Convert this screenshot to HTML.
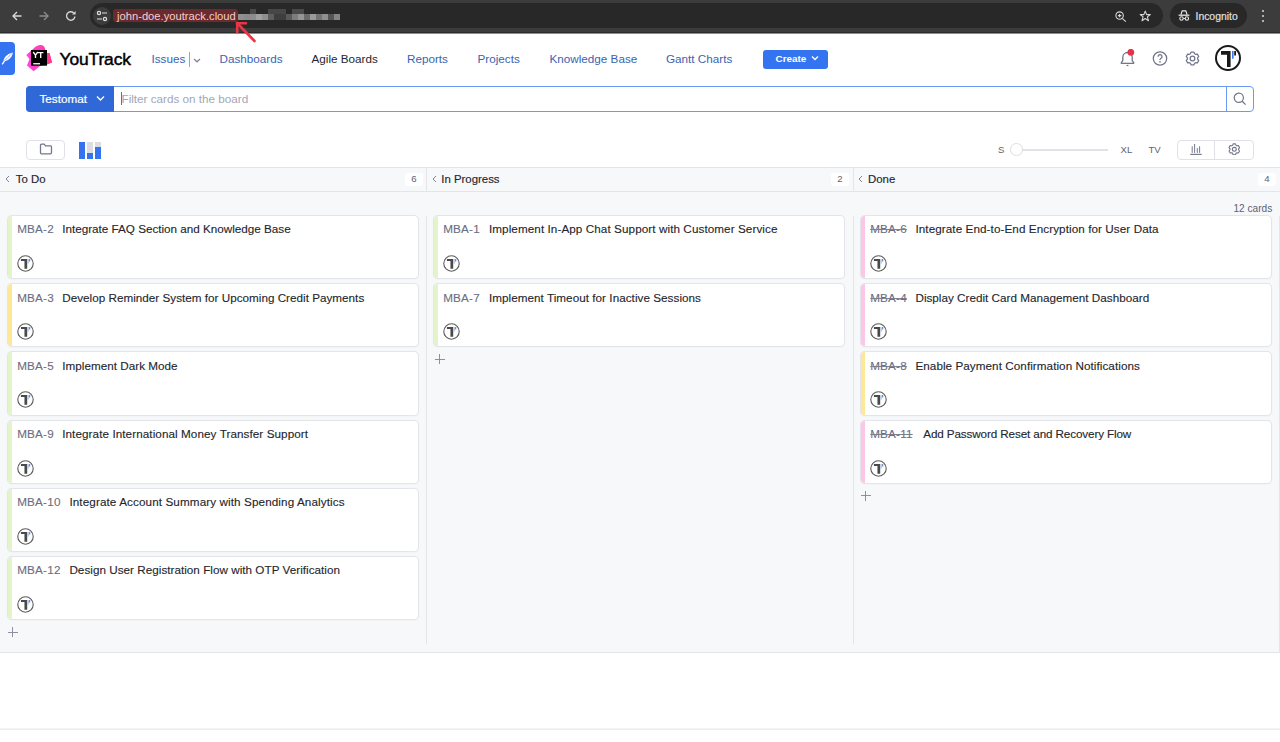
<!DOCTYPE html>
<html><head><meta charset="utf-8">
<style>
*{box-sizing:border-box;margin:0;padding:0}
html,body{width:1280px;height:742px;overflow:hidden;background:#fff;font-family:"Liberation Sans",sans-serif;position:relative}
.a{position:absolute}
.nw{white-space:nowrap}
.nav{font-size:11.7px;line-height:14px;color:#3a63b0;top:52px;white-space:nowrap}
.card{position:absolute;background:#fff;border-radius:4px;height:62.2px;width:410px;box-shadow:0 0 0 1px #e4e5ea,0 0 1.5px 1px rgba(0,0,0,.04),0 1px 2px rgba(0,0,0,.05);overflow:hidden}
.bar{position:absolute;left:0;top:0;bottom:0;width:3.6px}
.ln{position:absolute;left:9.2px;top:6.4px;font-size:11.7px;line-height:14px;white-space:nowrap;color:#24262d;-webkit-text-stroke:0.12px #24262d}
.id{color:#6a6e80;margin-right:8px;letter-spacing:0.2px;-webkit-text-stroke:0.1px #6a6e80}
.st{text-decoration:line-through;text-decoration-color:#7c8092}
.av{position:absolute;left:9px;top:39px;width:17px;height:17px}
.ch{position:absolute;top:168px;height:23px;font-size:11.4px;line-height:14px;color:#25272e;-webkit-text-stroke:0.15px #25272e}
.cnt{position:absolute;top:172.5px;width:18px;height:13.6px;background:#fff;border-radius:3px;font-size:9.6px;line-height:12.2px;text-align:center;color:#5d6275}
.plus{position:absolute;width:10px;height:10px}
.plus:before{content:"";position:absolute;left:0;top:4.5px;width:10px;height:1.2px;background:#8c90a0}
.plus:after{content:"";position:absolute;left:4.5px;top:0;width:1.2px;height:10px;background:#8c90a0}
</style></head><body>

<div class="a" style="left:0;top:0;width:1280px;height:33px;background:#3c3c3c;border-bottom:1px solid #2c2c2c"></div><div class="a" style="left:0;top:33px;width:1280px;height:1px;background:#8e8e8e"></div>
<div class="a" style="left:90px;top:3.2px;width:1073px;height:25px;border-radius:12.5px;background:#282828"></div>
<div class="a" style="left:93px;top:7px;width:18px;height:18px;border-radius:9px;background:#3c3c3c"></div>
<div class="a" style="left:1170px;top:3.2px;width:77px;height:25px;border-radius:12.5px;background:#282828"></div>
<svg class="a" style="left:11.5px;top:10.5px" width="10" height="10" viewBox="0 0 10 10"><path d="M9.5 5H1.2M5 1L1 5L5 9" fill="none" stroke="#d6d6d6" stroke-width="1.4"/></svg>
<svg class="a" style="left:38.5px;top:10.5px" width="10" height="10" viewBox="0 0 10 10"><path d="M0.5 5H8.8M5 1L9 5L5 9" fill="none" stroke="#8a8a8a" stroke-width="1.4"/></svg>
<svg class="a" style="left:64.5px;top:10px" width="12" height="12" viewBox="0 0 12 12"><path d="M9.9 6.5A4.2 4.2 0 1 1 8.7 3" fill="none" stroke="#d6d6d6" stroke-width="1.4"/><path d="M10.6 1V4.6H7z" fill="#d6d6d6"/></svg>
<svg class="a" style="left:96px;top:10px" width="12" height="12" viewBox="0 0 12 12"><circle cx="3" cy="3" r="1.6" fill="none" stroke="#e0e0e0" stroke-width="1.2"/><path d="M6 3h5M1 9h5" stroke="#e0e0e0" stroke-width="1.2"/><circle cx="9" cy="9" r="1.6" fill="none" stroke="#e0e0e0" stroke-width="1.2"/></svg>
<div class="a" style="left:113px;top:9px;width:125px;height:13px;border-radius:3px;background:#6a2a2e"></div>
<div class="a nw" style="left:117px;top:8.5px;font-size:11.2px;line-height:14px;color:#f2cfd0">john-doe.youtrack.cloud</div>
<div class="a" style="left:237.5px;top:14px;width:6px;height:6px;background:#909090"></div>
<div class="a" style="left:243.5px;top:14px;width:6px;height:6px;background:#8a8a8a"></div>
<div class="a" style="left:249.5px;top:14px;width:6px;height:6px;background:#8c8c8c"></div>
<div class="a" style="left:255.5px;top:14px;width:6px;height:6px;background:#a0a0a0"></div>
<div class="a" style="left:261.5px;top:14px;width:6px;height:6px;background:#8f8f8f"></div>
<div class="a" style="left:267.5px;top:14px;width:6px;height:6px;background:#5e5e5e"></div>
<div class="a" style="left:273.5px;top:14px;width:6px;height:6px;background:#3e3e3e"></div>
<div class="a" style="left:279.5px;top:14px;width:6px;height:6px;background:#3e3e3e"></div>
<div class="a" style="left:285.5px;top:14px;width:6px;height:6px;background:#5a5a5a"></div>
<div class="a" style="left:291.5px;top:14px;width:6px;height:6px;background:#7d7d7d"></div>
<div class="a" style="left:297.5px;top:14px;width:6px;height:6px;background:#959595"></div>
<div class="a" style="left:303.5px;top:14px;width:6px;height:6px;background:#6a6a6a"></div>
<div class="a" style="left:309.5px;top:14px;width:6px;height:6px;background:#9a9a9a"></div>
<div class="a" style="left:315.5px;top:14px;width:6px;height:6px;background:#747474"></div>
<div class="a" style="left:321.5px;top:14px;width:6px;height:6px;background:#8f8f8f"></div>
<div class="a" style="left:327.5px;top:14px;width:6px;height:6px;background:#555555"></div>
<div class="a" style="left:333.5px;top:14px;width:6px;height:6px;background:#858585"></div>
<div class="a" style="left:249.5px;top:9px;width:6px;height:5px;background:#4a4a4a"></div>
<div class="a" style="left:267.5px;top:9px;width:6px;height:5px;background:#474747"></div>
<div class="a" style="left:273.5px;top:9px;width:6px;height:5px;background:#474747"></div>
<div class="a" style="left:279.5px;top:9px;width:6px;height:5px;background:#474747"></div>
<div class="a" style="left:291.5px;top:9px;width:6px;height:5px;background:#4a4a4a"></div>
<div class="a" style="left:297.5px;top:9px;width:6px;height:5px;background:#4a4a4a"></div>
<svg class="a" style="left:230px;top:18px" width="30" height="26" viewBox="0 0 30 26"><path d="M7 5L24.5 23" stroke="#ee3344" stroke-width="2.6" stroke-linecap="round"/><path d="M7.2 5.2H16M7.2 5.2V14" stroke="#ee3344" stroke-width="2.6" stroke-linecap="round"/></svg>
<svg class="a" style="left:1115px;top:11px" width="12" height="11" viewBox="0 0 12 11"><circle cx="4.6" cy="4.6" r="3.7" fill="none" stroke="#d8d8d8" stroke-width="1.1"/><path d="M7.3 7.3L10.8 10.6M2.9 4.6h3.4M4.6 2.9v3.4" stroke="#d8d8d8" stroke-width="1.1"/></svg>
<svg class="a" style="left:1138.5px;top:9.5px" width="12.5" height="12" viewBox="0 0 13 13"><path d="M6.5 1.2L8 5H12L8.8 7.5L10 11.6L6.5 9.2L3 11.6L4.2 7.5L1 5H5z" fill="none" stroke="#d8d8d8" stroke-width="1.15" stroke-linejoin="round"/></svg>
<svg class="a" style="left:1178px;top:9px" width="12" height="12" viewBox="0 0 12 12"><path d="M3 5.6L4.1 1.9H7.9L9 5.6" fill="none" stroke="#e6e6e6" stroke-width="1.2" stroke-linejoin="round"/><path d="M0.6 6.2H11.4" stroke="#e6e6e6" stroke-width="1.3"/><circle cx="3.5" cy="9.5" r="1.7" fill="none" stroke="#e6e6e6" stroke-width="1.1"/><circle cx="8.9" cy="9.5" r="1.7" fill="none" stroke="#e6e6e6" stroke-width="1.1"/><path d="M5.2 9.5H7.2" stroke="#e6e6e6" stroke-width="1"/></svg>
<div class="a nw" style="left:1195.5px;top:10px;font-size:10.4px;line-height:13px;color:#e4e4e4;-webkit-text-stroke:0.15px #e4e4e4">Incognito</div>
<div class="a" style="left:1262px;top:10.0px;width:2.4px;height:2.4px;border-radius:2px;background:#d8d8d8"></div>
<div class="a" style="left:1262px;top:15.0px;width:2.4px;height:2.4px;border-radius:2px;background:#d8d8d8"></div>
<div class="a" style="left:1262px;top:19.6px;width:2.4px;height:2.4px;border-radius:2px;background:#d8d8d8"></div>
<div class="a" style="left:0;top:42px;width:15px;height:33px;background:#3574f0;border-radius:0 4px 4px 0"></div>
<svg class="a" style="left:1px;top:51px" width="14" height="14" viewBox="0 0 14 14"><path d="M1.5 12.8L3.2 10.3" stroke="#fff" stroke-width="1.4" stroke-linecap="round"/><path d="M2.6 10.6C2.2 7.5 5.5 3 11.8 1.6C11.5 5.2 8.5 9.6 2.6 10.6z" fill="#fff"/><path d="M3.6 9.5L10.5 3" stroke="#3574f0" stroke-width=".8" stroke-dasharray="1.3 .8"/></svg>
<svg class="a" style="left:26px;top:44px" width="27" height="28" viewBox="0 0 27 28"><defs><linearGradient id="pg" x1="0" y1="0" x2="1" y2="0"><stop offset="0" stop-color="#ff45e0"/><stop offset="1" stop-color="#ff3a9a"/></linearGradient></defs><path d="M0.3 10.9L7 5C10 2 12 1 14.5 1C17 1 18.5 2.5 19 4.5L20 9.5L23.5 9L26 18.5L21 20.5L14 22L7.6 27.3L1 21.5L3.5 15z" fill="url(#pg)"/><path d="M20 9.5L23.5 9L26 18.5L20 20.5z" fill="#ff3d86"/><rect x="5" y="6" width="16" height="15.7" fill="#000"/><path d="M7.2 8L9.5 11.2V14M11.8 8L9.5 11.2M12 8.6H17.4M14.7 8.6V14" fill="none" stroke="#fff" stroke-width="1.35"/><rect x="7.2" y="19.1" width="6.8" height="1.3" fill="#fff"/></svg>
<div class="a nw" style="left:59.5px;top:49px;font-size:17.4px;line-height:20px;color:#000;-webkit-text-stroke:0.45px #000;letter-spacing:-0.1px">YouTrack</div>
<div class="a nav" style="left:151.5px">Issues</div>
<div class="a" style="left:188.7px;top:52px;width:1px;height:15px;background:#a3a7b5"></div>
<svg class="a" style="left:193px;top:58px" width="8" height="5" viewBox="0 0 8 5"><path d="M1 1L4 3.8L7 1" fill="none" stroke="#80869a" stroke-width="1.25"/></svg>
<div class="a nav" style="left:219.5px;color:#3a63b0">Dashboards</div>
<div class="a nav" style="left:311.5px;color:#25272e">Agile Boards</div>
<div class="a nav" style="left:407px;color:#3a63b0">Reports</div>
<div class="a nav" style="left:477.5px;color:#3a63b0">Projects</div>
<div class="a nav" style="left:549.5px;color:#3a63b0">Knowledge Base</div>
<div class="a nav" style="left:666px;color:#3a63b0">Gantt Charts</div>
<div class="a" style="left:763px;top:50px;width:65px;height:19px;background:#3574f0;border-radius:3px"></div>
<div class="a nw" style="left:775.5px;top:51.8px;font-size:9.9px;line-height:13px;color:#fff;font-weight:bold">Create</div>
<svg class="a" style="left:811px;top:55px" width="8" height="6" viewBox="0 0 8 6"><path d="M1 1.5L4 4.5L7 1.5" fill="none" stroke="#fff" stroke-width="1.3"/></svg>
<svg class="a" style="left:1119px;top:49px" width="17" height="19" viewBox="0 0 17 19"><path d="M2.3 14.3V13.6L3.8 11.6V8.2A4.7 4.7 0 0 1 13.2 8.2V11.6L14.7 13.6V14.3z" fill="none" stroke="#70758a" stroke-width="1.3" stroke-linejoin="round"/><path d="M7.6 16.5h1.8" stroke="#70758a" stroke-width="1.3"/><circle cx="11.8" cy="3.3" r="3.4" fill="#e5344a"/></svg>
<svg class="a" style="left:1152.4px;top:51.2px" width="16" height="16" viewBox="0 0 16 16"><circle cx="8" cy="7.5" r="6.7" fill="none" stroke="#70758a" stroke-width="1.25"/><path d="M6.1 5.7A1.95 1.95 0 1 1 8.7 7.5C8.1 7.8 8 8.2 8 8.9" fill="none" stroke="#70758a" stroke-width="1.3"/><rect x="7.25" y="10.1" width="1.5" height="1.4" fill="#70758a"/></svg>
<svg class="a" style="left:1185px;top:51px" width="15" height="15" viewBox="0 0 16 16"><path d="M6.54 1.15 L9.46 1.15 L10.24 2.98 L11.23 3.55 L13.20 3.32 L14.66 5.84 L13.47 7.43 L13.47 8.57 L14.66 10.16 L13.20 12.68 L11.23 12.45 L10.24 13.02 L9.46 14.85 L6.54 14.85 L5.76 13.02 L4.77 12.45 L2.80 12.68 L1.34 10.16 L2.53 8.57 L2.53 7.43 L1.34 5.84 L2.80 3.32 L4.77 3.55 L5.76 2.98Z" fill="none" stroke="#70758a" stroke-width="1.3" stroke-linejoin="round"/><circle cx="8" cy="8" r="2.5" fill="none" stroke="#70758a" stroke-width="1.3"/></svg>
<div class="a" style="left:1215px;top:45px"><svg width="26" height="26" viewBox="0 0 26 26"><circle cx="13" cy="13" r="12" fill="#fff" stroke="#1a1a1a" stroke-width="2"/><path d="M6 6h9.6v3.8H6zM12 6h3.6v16H12z" fill="#1a1a1a"/><path d="M17 6h1.6v7.7H17z" fill="#3b78f0"/><path d="M19.2 6h1.8v4.6h-1.8z" fill="#1a1a1a"/></svg></div>
<div class="a" style="left:26px;top:86px;width:1228px;height:26px;border:1px solid #6a9bf4;border-radius:4px;background:#fff"></div>
<div class="a" style="left:26px;top:86px;width:88px;height:26px;background:#3068d8;border-radius:4px 0 0 4px"></div>
<div class="a nw" style="left:39.5px;top:91.6px;font-size:11.7px;line-height:14px;color:#fff;-webkit-text-stroke:0.2px #fff;letter-spacing:0px">Testomat</div>
<svg class="a" style="left:96px;top:95px" width="9" height="7" viewBox="0 0 9 7"><path d="M1 1.5L4.5 5L8 1.5" fill="none" stroke="#fff" stroke-width="1.3"/></svg>
<div class="a" style="left:120.5px;top:92px;width:1px;height:13px;background:#3574f0"></div>
<div class="a nw" style="left:121.5px;top:92px;font-size:11.7px;line-height:14px;color:#a1a6b8">Filter cards on the board</div>
<div class="a" style="left:1226px;top:86px;width:1px;height:26px;background:#6a9bf4"></div>
<svg class="a" style="left:1233px;top:92px" width="14" height="14" viewBox="0 0 14 14"><circle cx="5.8" cy="5.8" r="4.6" fill="none" stroke="#70758a" stroke-width="1.2"/><path d="M9.2 9.2L12.6 12.6" stroke="#70758a" stroke-width="1.3"/></svg>
<div class="a" style="left:26px;top:140px;width:39px;height:19.5px;border:1px solid #dfe1e6;border-radius:4px"></div>
<svg class="a" style="left:39px;top:143px" width="14" height="12" viewBox="0 0 14 12"><path d="M1.5 2.2C1.5 1.6 1.9 1.2 2.5 1.2H5.2L6.5 2.8H11.5C12.1 2.8 12.5 3.2 12.5 3.8V9.8C12.5 10.4 12.1 10.8 11.5 10.8H2.5C1.9 10.8 1.5 10.4 1.5 9.8z" fill="none" stroke="#73788a" stroke-width="1.3"/></svg>
<div class="a" style="left:78.5px;top:141.7px;width:6.3px;height:17.6px;background:#3574f0"></div>
<div class="a" style="left:86.8px;top:141.7px;width:6.2px;height:17.6px;background:#dcdde2"></div>
<div class="a" style="left:86.8px;top:153px;width:6.2px;height:6.3px;background:#3574f0"></div>
<div class="a" style="left:95px;top:141.7px;width:6.3px;height:17.6px;background:#dcdde2"></div>
<div class="a" style="left:95px;top:147px;width:6.3px;height:12.3px;background:#3574f0"></div>
<div class="a nw" style="left:998px;top:144px;font-size:9.6px;line-height:12px;color:#5d6275">S</div>
<div class="a" style="left:1022px;top:148.8px;width:86px;height:1.8px;background:#e1e2e7"></div>
<div class="a" style="left:1010.3px;top:143.3px;width:12.6px;height:12.6px;border:1.2px solid #dcdee3;border-radius:50%;background:#fff"></div>
<div class="a nw" style="left:1120.5px;top:144px;font-size:9.6px;line-height:12px;color:#5d6275">XL</div>
<div class="a nw" style="left:1148.5px;top:144px;font-size:9.6px;line-height:12px;color:#5d6275">TV</div>
<div class="a" style="left:1176.5px;top:140.3px;width:77px;height:19.5px;border:1px solid #dfe1e6;border-radius:4px"></div>
<div class="a" style="left:1213.8px;top:140.3px;width:1px;height:19.5px;background:#dfe1e6"></div>
<svg class="a" style="left:1190px;top:143px" width="12" height="12" viewBox="0 0 12 12"><path d="M.2 11.4h11.5" stroke="#757a8c" stroke-width="1.2"/><path d="M2.2 3.3v6.6M4.6 1v8.9M7.3 5.1v4.8M9.6 3.3v6.6" stroke="#757a8c" stroke-width="1"/></svg>
<svg class="a" style="left:1227.8px;top:142.8px" width="12.6" height="12.6" viewBox="0 0 16 16"><path d="M6.54 1.15 L9.46 1.15 L10.24 2.98 L11.23 3.55 L13.20 3.32 L14.66 5.84 L13.47 7.43 L13.47 8.57 L14.66 10.16 L13.20 12.68 L11.23 12.45 L10.24 13.02 L9.46 14.85 L6.54 14.85 L5.76 13.02 L4.77 12.45 L2.80 12.68 L1.34 10.16 L2.53 8.57 L2.53 7.43 L1.34 5.84 L2.80 3.32 L4.77 3.55 L5.76 2.98Z" fill="none" stroke="#70758a" stroke-width="1.4" stroke-linejoin="round"/><circle cx="8" cy="8" r="2.5" fill="none" stroke="#70758a" stroke-width="1.4"/></svg>
<div class="a" style="left:0;top:166.5px;width:1280px;height:486.5px;background:#f7f8fa;border-top:1px solid #e4e5e9;border-bottom:1px solid #e4e5e9"></div>
<div class="a" style="left:0;top:191px;width:1280px;height:1px;background:#e4e5e9"></div>
<div class="a" style="left:426px;top:167px;width:1px;height:24px;background:#e4e5e9"></div>
<div class="a" style="left:852.5px;top:167px;width:1px;height:24px;background:#e4e5e9"></div>
<div class="a" style="left:426px;top:216px;width:1px;height:428px;background:#e4e5e9"></div>
<div class="a" style="left:852.5px;top:216px;width:1px;height:428px;background:#e4e5e9"></div>
<div class="a" style="left:1279px;top:216px;width:1px;height:437px;background:#e4e5e9"></div>
<div class="a nw" style="left:1233.5px;top:202.8px;font-size:10.1px;line-height:12px;color:#5d6275">12 cards</div>
<svg class="a" style="left:5px;top:175px" width="5" height="8" viewBox="0 0 5 8"><path d="M4 1L1 4L4 7" fill="none" stroke="#7f8599" stroke-width="1"/></svg>
<div class="ch nw" style="left:15.8px;top:172px">To Do</div>
<div class="cnt" style="left:405px">6</div>
<div class="card" style="left:8px;top:216.0px"><div class="bar" style="background:#e3f4c9"></div><div class="ln"><span class="id" style="margin-right:8.30px">MBA-2</span><span style="letter-spacing:-0.007px">Integrate FAQ Section and Knowledge Base</span></div><div class="av"><svg width="17" height="17" viewBox="0 0 26 26"><circle cx="13" cy="13" r="11.8" fill="#fff" stroke="#5c5c5c" stroke-width="1.7"/><path d="M6 6h9.6v3H6zM11.4 6h4.2v15H11.4z" fill="#4a4a4a"/><path d="M15.6 6h2.8v7H15.6z" fill="#b5ccff"/><path d="M18.6 6h1.6v4h-1.6z" fill="#7a7a7a"/></svg></div></div>
<div class="card" style="left:8px;top:284.2px"><div class="bar" style="background:#fde896"></div><div class="ln"><span class="id" style="margin-right:8.30px">MBA-3</span><span style="letter-spacing:0.012px">Develop Reminder System for Upcoming Credit Payments</span></div><div class="av"><svg width="17" height="17" viewBox="0 0 26 26"><circle cx="13" cy="13" r="11.8" fill="#fff" stroke="#5c5c5c" stroke-width="1.7"/><path d="M6 6h9.6v3H6zM11.4 6h4.2v15H11.4z" fill="#4a4a4a"/><path d="M15.6 6h2.8v7H15.6z" fill="#b5ccff"/><path d="M18.6 6h1.6v4h-1.6z" fill="#7a7a7a"/></svg></div></div>
<div class="card" style="left:8px;top:352.4px"><div class="bar" style="background:#e3f4c9"></div><div class="ln"><span class="id" style="margin-right:8.30px">MBA-5</span><span style="letter-spacing:0.021px">Implement Dark Mode</span></div><div class="av"><svg width="17" height="17" viewBox="0 0 26 26"><circle cx="13" cy="13" r="11.8" fill="#fff" stroke="#5c5c5c" stroke-width="1.7"/><path d="M6 6h9.6v3H6zM11.4 6h4.2v15H11.4z" fill="#4a4a4a"/><path d="M15.6 6h2.8v7H15.6z" fill="#b5ccff"/><path d="M18.6 6h1.6v4h-1.6z" fill="#7a7a7a"/></svg></div></div>
<div class="card" style="left:8px;top:420.6px"><div class="bar" style="background:#e3f4c9"></div><div class="ln"><span class="id" style="margin-right:8.30px">MBA-9</span><span style="letter-spacing:0.078px">Integrate International Money Transfer Support</span></div><div class="av"><svg width="17" height="17" viewBox="0 0 26 26"><circle cx="13" cy="13" r="11.8" fill="#fff" stroke="#5c5c5c" stroke-width="1.7"/><path d="M6 6h9.6v3H6zM11.4 6h4.2v15H11.4z" fill="#4a4a4a"/><path d="M15.6 6h2.8v7H15.6z" fill="#b5ccff"/><path d="M18.6 6h1.6v4h-1.6z" fill="#7a7a7a"/></svg></div></div>
<div class="card" style="left:8px;top:488.8px"><div class="bar" style="background:#e3f4c9"></div><div class="ln"><span class="id" style="margin-right:8.80px">MBA-10</span><span style="letter-spacing:0.102px">Integrate Account Summary with Spending Analytics</span></div><div class="av"><svg width="17" height="17" viewBox="0 0 26 26"><circle cx="13" cy="13" r="11.8" fill="#fff" stroke="#5c5c5c" stroke-width="1.7"/><path d="M6 6h9.6v3H6zM11.4 6h4.2v15H11.4z" fill="#4a4a4a"/><path d="M15.6 6h2.8v7H15.6z" fill="#b5ccff"/><path d="M18.6 6h1.6v4h-1.6z" fill="#7a7a7a"/></svg></div></div>
<div class="card" style="left:8px;top:557.0px"><div class="bar" style="background:#e3f4c9"></div><div class="ln"><span class="id" style="margin-right:8.80px">MBA-12</span><span style="letter-spacing:0.024px">Design User Registration Flow with OTP Verification</span></div><div class="av"><svg width="17" height="17" viewBox="0 0 26 26"><circle cx="13" cy="13" r="11.8" fill="#fff" stroke="#5c5c5c" stroke-width="1.7"/><path d="M6 6h9.6v3H6zM11.4 6h4.2v15H11.4z" fill="#4a4a4a"/><path d="M15.6 6h2.8v7H15.6z" fill="#b5ccff"/><path d="M18.6 6h1.6v4h-1.6z" fill="#7a7a7a"/></svg></div></div>
<div class="plus" style="left:7.5px;top:627.2px"></div>
<svg class="a" style="left:432px;top:175px" width="5" height="8" viewBox="0 0 5 8"><path d="M4 1L1 4L4 7" fill="none" stroke="#7f8599" stroke-width="1"/></svg>
<div class="ch nw" style="left:441.3px;top:172px">In Progress</div>
<div class="cnt" style="left:831px">2</div>
<div class="card" style="left:434px;top:216.0px"><div class="bar" style="background:#e3f4c9"></div><div class="ln"><span class="id" style="margin-right:9.00px">MBA-1</span><span style="letter-spacing:0.080px">Implement In-App Chat Support with Customer Service</span></div><div class="av"><svg width="17" height="17" viewBox="0 0 26 26"><circle cx="13" cy="13" r="11.8" fill="#fff" stroke="#5c5c5c" stroke-width="1.7"/><path d="M6 6h9.6v3H6zM11.4 6h4.2v15H11.4z" fill="#4a4a4a"/><path d="M15.6 6h2.8v7H15.6z" fill="#b5ccff"/><path d="M18.6 6h1.6v4h-1.6z" fill="#7a7a7a"/></svg></div></div>
<div class="card" style="left:434px;top:284.2px"><div class="bar" style="background:#e3f4c9"></div><div class="ln"><span class="id" style="margin-right:9.00px">MBA-7</span><span style="letter-spacing:0.041px">Implement Timeout for Inactive Sessions</span></div><div class="av"><svg width="17" height="17" viewBox="0 0 26 26"><circle cx="13" cy="13" r="11.8" fill="#fff" stroke="#5c5c5c" stroke-width="1.7"/><path d="M6 6h9.6v3H6zM11.4 6h4.2v15H11.4z" fill="#4a4a4a"/><path d="M15.6 6h2.8v7H15.6z" fill="#b5ccff"/><path d="M18.6 6h1.6v4h-1.6z" fill="#7a7a7a"/></svg></div></div>
<div class="plus" style="left:434.5px;top:354.4px"></div>
<svg class="a" style="left:858px;top:175px" width="5" height="8" viewBox="0 0 5 8"><path d="M4 1L1 4L4 7" fill="none" stroke="#7f8599" stroke-width="1"/></svg>
<div class="ch nw" style="left:868px;top:172px">Done</div>
<div class="cnt" style="left:1258px">4</div>
<div class="card" style="left:861px;top:216.0px"><div class="bar" style="background:#fcc6e6"></div><div class="ln"><span class="id st" style="margin-right:8.50px">MBA-6</span><span style="letter-spacing:0.078px">Integrate End-to-End Encryption for User Data</span></div><div class="av"><svg width="17" height="17" viewBox="0 0 26 26"><circle cx="13" cy="13" r="11.8" fill="#fff" stroke="#5c5c5c" stroke-width="1.7"/><path d="M6 6h9.6v3H6zM11.4 6h4.2v15H11.4z" fill="#4a4a4a"/><path d="M15.6 6h2.8v7H15.6z" fill="#b5ccff"/><path d="M18.6 6h1.6v4h-1.6z" fill="#7a7a7a"/></svg></div></div>
<div class="card" style="left:861px;top:284.2px"><div class="bar" style="background:#fcc6e6"></div><div class="ln"><span class="id st" style="margin-right:8.50px">MBA-4</span><span style="letter-spacing:0.013px">Display Credit Card Management Dashboard</span></div><div class="av"><svg width="17" height="17" viewBox="0 0 26 26"><circle cx="13" cy="13" r="11.8" fill="#fff" stroke="#5c5c5c" stroke-width="1.7"/><path d="M6 6h9.6v3H6zM11.4 6h4.2v15H11.4z" fill="#4a4a4a"/><path d="M15.6 6h2.8v7H15.6z" fill="#b5ccff"/><path d="M18.6 6h1.6v4h-1.6z" fill="#7a7a7a"/></svg></div></div>
<div class="card" style="left:861px;top:352.4px"><div class="bar" style="background:#fde896"></div><div class="ln"><span class="id st" style="margin-right:8.50px">MBA-8</span><span style="letter-spacing:0.056px">Enable Payment Confirmation Notifications</span></div><div class="av"><svg width="17" height="17" viewBox="0 0 26 26"><circle cx="13" cy="13" r="11.8" fill="#fff" stroke="#5c5c5c" stroke-width="1.7"/><path d="M6 6h9.6v3H6zM11.4 6h4.2v15H11.4z" fill="#4a4a4a"/><path d="M15.6 6h2.8v7H15.6z" fill="#b5ccff"/><path d="M18.6 6h1.6v4h-1.6z" fill="#7a7a7a"/></svg></div></div>
<div class="card" style="left:861px;top:420.6px"><div class="bar" style="background:#fcc6e6"></div><div class="ln"><span class="id st" style="margin-right:10.50px">MBA-11</span><span style="letter-spacing:-0.125px">Add Password Reset and Recovery Flow</span></div><div class="av"><svg width="17" height="17" viewBox="0 0 26 26"><circle cx="13" cy="13" r="11.8" fill="#fff" stroke="#5c5c5c" stroke-width="1.7"/><path d="M6 6h9.6v3H6zM11.4 6h4.2v15H11.4z" fill="#4a4a4a"/><path d="M15.6 6h2.8v7H15.6z" fill="#b5ccff"/><path d="M18.6 6h1.6v4h-1.6z" fill="#7a7a7a"/></svg></div></div>
<div class="plus" style="left:860.5px;top:490.8px"></div>
<div class="a" style="left:0;top:728px;width:1280px;height:1px;background:#f3f4f6"></div><div class="a" style="left:0;top:729px;width:1280px;height:1px;background:#eaecef"></div>
</body></html>
